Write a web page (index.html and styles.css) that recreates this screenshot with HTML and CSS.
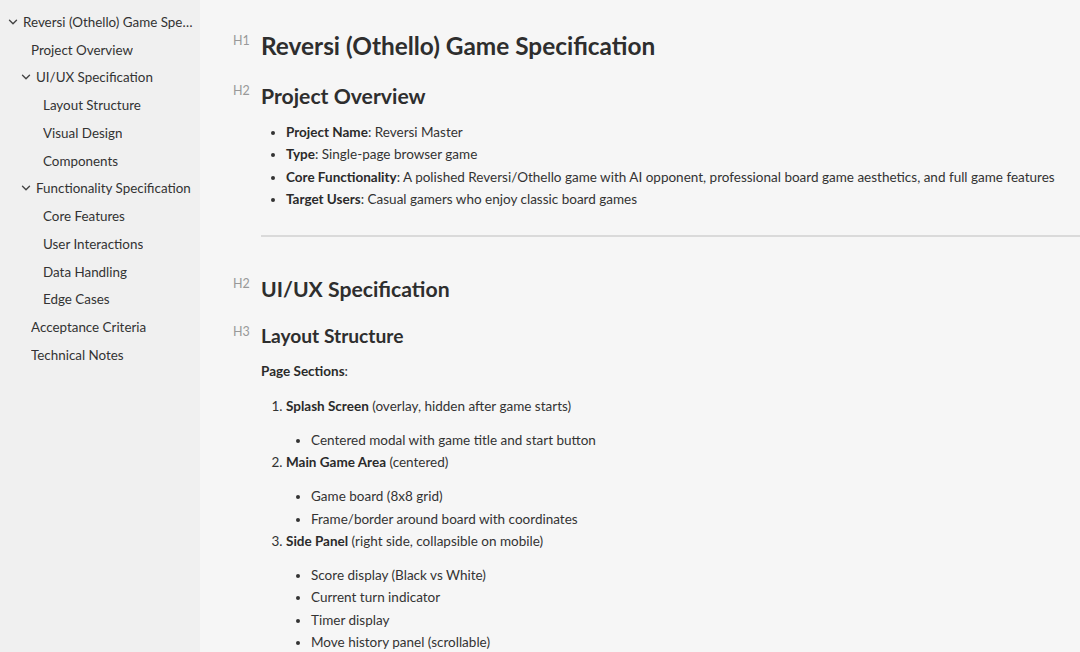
FILE: index.html
```html
<!DOCTYPE html>
<html lang="en">
<head>
<meta charset="utf-8">
<title>Reversi (Othello) Game Specification</title>
<link rel="stylesheet" href="styles.css">
</head>
<body>
<aside class="sidebar">
  <ul class="toc">
    <li class="toc-item lvl1"><span class="chev"><svg viewBox="0 0 10 10" width="10" height="10"><path d="M1.5 3.2 L5 6.7 L8.5 3.2" fill="none" stroke="#444" stroke-width="1.4" stroke-linecap="round" stroke-linejoin="round"/></svg></span><span class="toc-text">Reversi (Othello) Game Specification</span></li>
    <li class="toc-item lvl2 leaf"><span class="toc-text">Project Overview</span></li>
    <li class="toc-item lvl2"><span class="chev"><svg viewBox="0 0 10 10" width="10" height="10"><path d="M1.5 3.2 L5 6.7 L8.5 3.2" fill="none" stroke="#444" stroke-width="1.4" stroke-linecap="round" stroke-linejoin="round"/></svg></span><span class="toc-text">UI/UX Specification</span></li>
    <li class="toc-item lvl3"><span class="toc-text">Layout Structure</span></li>
    <li class="toc-item lvl3"><span class="toc-text">Visual Design</span></li>
    <li class="toc-item lvl3"><span class="toc-text">Components</span></li>
    <li class="toc-item lvl2"><span class="chev"><svg viewBox="0 0 10 10" width="10" height="10"><path d="M1.5 3.2 L5 6.7 L8.5 3.2" fill="none" stroke="#444" stroke-width="1.4" stroke-linecap="round" stroke-linejoin="round"/></svg></span><span class="toc-text">Functionality Specification</span></li>
    <li class="toc-item lvl3"><span class="toc-text">Core Features</span></li>
    <li class="toc-item lvl3"><span class="toc-text">User Interactions</span></li>
    <li class="toc-item lvl3"><span class="toc-text">Data Handling</span></li>
    <li class="toc-item lvl3"><span class="toc-text">Edge Cases</span></li>
    <li class="toc-item lvl2 leaf"><span class="toc-text">Acceptance Criteria</span></li>
    <li class="toc-item lvl2 leaf"><span class="toc-text">Technical Notes</span></li>
  </ul>
</aside>
<main class="content">
  <h1 class="heading h1"><span class="hmark">H1</span><span>Reversi (Othello) Game Specification</span></h1>
  <h2 class="heading h2 first-h2"><span class="hmark">H2</span><span>Project Overview</span></h2>
  <ul class="list top-list">
    <li><strong>Project Name</strong>: Reversi Master</li>
    <li><strong>Type</strong>: Single-page browser game</li>
    <li><strong>Core Functionality</strong>: A polished Reversi/Othello game with AI opponent, professional board game aesthetics, and full game features</li>
    <li><strong>Target Users</strong>: Casual gamers who enjoy classic board games</li>
  </ul>
  <hr class="rule">
  <h2 class="heading h2 after-rule"><span class="hmark">H2</span><span>UI/UX Specification</span></h2>
  <h3 class="heading h3"><span class="hmark">H3</span><span>Layout Structure</span></h3>
  <p class="para"><strong>Page Sections</strong>:</p>
  <ol class="olist">
    <li><strong>Splash Screen</strong> (overlay, hidden after game starts)
      <ul class="list sub">
        <li>Centered modal with game title and start button</li>
      </ul>
    </li>
    <li><strong>Main Game Area</strong> (centered)
      <ul class="list sub">
        <li>Game board (8x8 grid)</li>
        <li>Frame/border around board with coordinates</li>
      </ul>
    </li>
    <li><strong>Side Panel</strong> (right side, collapsible on mobile)
      <ul class="list sub">
        <li>Score display (Black vs White)</li>
        <li>Current turn indicator</li>
        <li>Timer display</li>
        <li>Move history panel (scrollable)</li>
      </ul>
    </li>
  </ol>
</main>
</body>
</html>
```
FILE: styles.css
```css
html, body {
  margin: 0;
  padding: 0;
  height: 100%;
}
body {
  display: flex;
  overflow: hidden;
  font-family: "Lato", "Open Sans", sans-serif;
  color: #333;
  background: #f6f6f6;
}
.sidebar {
  width: 200px;
  flex: 0 0 200px;
  background: #f0f0f0;
  padding-top: 8px;
  box-sizing: border-box;
}
.toc {
  list-style: none;
  margin: 0;
  padding: 0;
}
.toc-item {
  display: flex;
  align-items: center;
  height: 27.75px;
  font-size: 13.4px;
  color: #333;
  white-space: nowrap;
  padding-right: 4px;
}
.toc-text {
  overflow: hidden;
  text-overflow: ellipsis;
  min-width: 0;
}
.chev {
  display: flex;
  width: 15px;
  flex: 0 0 15px;
  align-items: center;
}
.lvl1 { padding-left: 8px; }
.lvl2 { padding-left: 21px; }
.lvl2.leaf { padding-left: 31px; }
.lvl3 { padding-left: 43px; }

.content {
  flex: 1;
  min-width: 0;
  padding: 28px 0 0 61px;
  overflow: hidden;
}
.heading {
  display: flex;
  margin: 0;
  font-weight: 700;
  color: #2e2e2e;
}
.hmark {
  width: 28px;
  margin-left: -28px;
  font-size: 12.5px;
  font-weight: 400;
  color: #999;
  line-height: 1;
}
.h1 {
  font-size: 24.4px;
  line-height: 36px;
}
.h1 .hmark { padding-top: 7px; }
.h2 {
  font-size: 21.2px;
  line-height: 30px;
}
.h2 .hmark { padding-top: 4px; }
.h3 {
  font-size: 19.2px;
  line-height: 26px;
}
.h3 .hmark { padding-top: 3px; }
.first-h2 { margin-top: 17px; }
.after-rule { margin-top: 37px; }
.h3 { margin-top: 19px; }

.list, .olist {
  margin: 0;
  padding-left: 25px;
  font-size: 13.5px;
  line-height: 22.3px;
}
.list {
  list-style: disc;
}
.top-list {
  margin-top: 10px;
  white-space: nowrap;
}
.list strong, .olist strong, .para strong {
  font-weight: 700;
  color: #2a2a2a;
}
.rule {
  margin: 25px 0 0 0;
  border: 0;
  height: 2px;
  background: #dadada;
}
.para {
  margin: 11px 0 0 0;
  font-size: 13.5px;
  line-height: 22px;
}
.olist {
  margin-top: 13px;
}
.olist > li {
  line-height: 22px;
}
.sub {
  margin-top: 12px;
  line-height: 22.3px;
}
```
